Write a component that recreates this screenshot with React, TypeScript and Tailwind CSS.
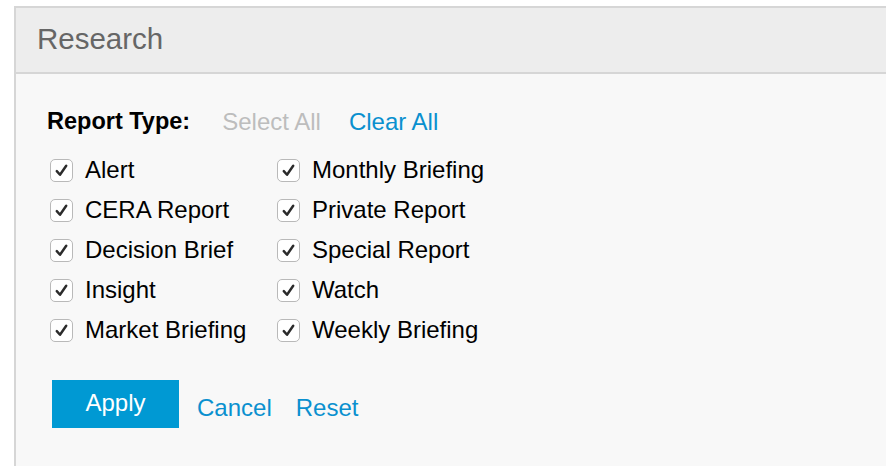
import React from "react";

const left = ["Alert", "CERA Report", "Decision Brief", "Insight", "Market Briefing"];
const right = ["Monthly Briefing", "Private Report", "Special Report", "Watch", "Weekly Briefing"];

function Check({ label }: { label: string }) {
  return (
    <label className="flex items-center h-[40px] gap-[12px] cursor-pointer">
      <span className="flex items-center justify-center w-[23px] h-[23px] rounded-[5px] border border-[#b9b9b9] bg-white">
        <svg width="15" height="15" viewBox="0 0 14 14" fill="none">
          <path d="M2.6 7.6 L5.6 11 L11.4 2.6" stroke="#2b2b2b" strokeWidth="2.3" strokeLinecap="round" strokeLinejoin="round" />
        </svg>
      </span>
      <span className="text-[24px] text-[#000]">{label}</span>
    </label>
  );
}

export default function App() {
  return (
    <div className="min-h-[466px] bg-white pt-[6px] pl-[14px] overflow-hidden" style={{ fontFamily: '"Liberation Sans", Arial, sans-serif' }}>
      <div className="border-t-2 border-l-2 border-[#d6d6d6] h-[460px] flex flex-col">
        <div className="h-[66px] bg-[#ededed] border-b-2 border-[#d6d6d6] flex items-center pl-[21px]">
          <h2 className="text-[29.5px] text-[#666] leading-none -mt-[2px]">Research</h2>
        </div>
        <div className="flex-1 bg-[#f8f8f8] pl-[31px] pt-[28px]">
          <div className="flex items-center h-[40px] text-[24px]">
            <span className="font-bold text-[23.5px] text-[#000]">Report Type:</span>
            <span className="ml-[32px] text-[#bdbdbd]">Select All</span>
            <span className="ml-[28px] text-[#0a90cf]">Clear All</span>
          </div>
          <div className="flex mt-[8px] ml-[3px]">
            <div className="w-[227px] flex flex-col">
              {left.map((l) => (
                <Check key={l} label={l} />
              ))}
            </div>
            <div className="flex flex-col">
              {right.map((l) => (
                <Check key={l} label={l} />
              ))}
            </div>
          </div>
          <div className="flex items-center mt-[30px] ml-[5px]">
            <button className="w-[127px] h-[48px] bg-[#0099d3] text-white text-[24px] pb-[2px]">Apply</button>
            <span className="ml-[18px] mt-[8px] text-[24px] text-[#0a90cf]">Cancel</span>
            <span className="ml-[24px] mt-[8px] text-[24px] text-[#0a90cf]">Reset</span>
          </div>
        </div>
      </div>
    </div>
  );
}
